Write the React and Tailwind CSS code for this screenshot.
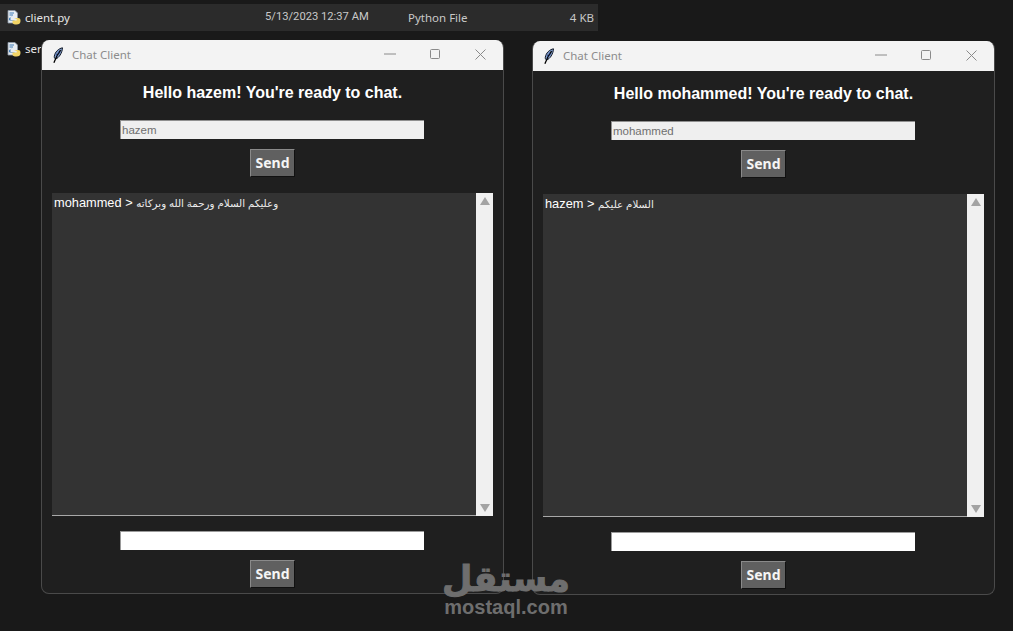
const Feather = () => (
  <svg width="12" height="17" viewBox="0 0 12 17" className="shrink-0">
    <path d="M10.5 0.8C6.5 1.5 3 5 2.3 9.2 2.1 10.6 2.6 11.6 3.5 12 7 11 10.2 6 10.5 0.8Z" fill="#7f9cc9" stroke="#111827" strokeWidth="1" />
    <path d="M8.6 3.2C6.4 6 4.2 9.5 1.9 15.8" fill="none" stroke="#000" strokeWidth="1.3" />
    <path d="M4.2 6.5L5.2 9M6.2 4.5L7.2 6.8" fill="none" stroke="#1e3a8a" strokeWidth="0.7" />
  </svg>
);

const PyIcon = () => (
  <svg width="14" height="15" viewBox="0 0 14 15" className="shrink-0">
    <path d="M1 0.5H8L10.5 3V13H1Z" fill="#e8edf2" stroke="#8a97a6" strokeWidth="0.8" />
    <path d="M2.5 3H7M2.5 5H6" stroke="#3f7cb8" strokeWidth="1" />
    <path d="M5.5 6.5C3.5 6.5 3.5 7.5 3.5 8.5V10H7.5V10.5H3C1.8 10.5 1.5 8 3 7.5L5.5 6.5Z" fill="#3d7ab5" />
    <path d="M7 8H11C13 8 13.5 9 13.5 11C13.5 13.5 12 14.5 9.5 14.5C7 14.5 5.5 14 5.5 12.5V10.5H9.5C10 10.5 10 9.5 9.5 9Z" fill="#f2d465" />
  </svg>
);

const SendButton = () => (
  <button className="w-[45px] h-[28px] pb-[2px] bg-[#606060] border border-t-[#8a8a8a] border-l-[#8a8a8a] border-r-[#111111] border-b-[#111111] text-[#f5f5f5] text-[14px] font-bold font-['Noto_Sans',sans-serif] flex items-center justify-center">
    Send
  </button>
);

const ChatWindow = ({ name, prefix, msg, className }) => (
  <div className={`absolute w-[463px] h-[554px] rounded-[8px] border-x border-b border-[#4a4a4a] bg-[#1f1f1f] overflow-hidden flex flex-col ${className}`}>
    <div className="h-[30px] shrink-0 bg-[#f3f3f3] flex items-center pl-[10px] text-[#8c8c8c]">
      <Feather />
      <span className="ml-[8px] text-[11.5px] font-['Noto_Sans',sans-serif] flex-1">Chat Client</span>
      <svg width="12" height="2" viewBox="0 0 12 2" className="mr-[34px] mb-[2px]"><path d="M0 1H12" stroke="#8a8a8a" strokeWidth="1" /></svg>
      <svg width="10" height="10" viewBox="0 0 10 10" className="mr-[35px] mb-[2px]"><rect x="0.5" y="0.5" width="9" height="9" rx="1" fill="none" stroke="#8a8a8a" /></svg>
      <svg width="11" height="11" viewBox="0 0 11 11" className="mr-[17px] mb-[2px]"><path d="M0.5 0.5L10.5 10.5M10.5 0.5L0.5 10.5" stroke="#8a8a8a" strokeWidth="1" /></svg>
    </div>
    <div className="flex-1 flex flex-col min-h-0">
      <div className="mt-[13px] h-[20px] leading-[20px] text-center text-white text-[16px] font-bold font-['Liberation_Sans',sans-serif]">
        Hello {name}! You're ready to chat.
      </div>
      <div className="mt-[17px] ml-[78px] w-[304px] h-[19px] bg-[#efefef] border-t border-l border-[#8f8f8f] pl-[1px] text-[#6f6f6f] text-[11.5px] leading-[19px] font-['Liberation_Sans',sans-serif]">
        {name}
      </div>
      <div className="mt-[10px] ml-[208px]"><SendButton /></div>
      <div className="mt-[16px] ml-[10px] w-[441px] h-[323px] flex">
        <div className="w-[424px] h-full bg-[#333333] border-b border-[#a8a8a8] pl-[2px] pt-[1px] text-white text-[12.8px] leading-[17px] font-['Liberation_Sans','DejaVu_Sans',sans-serif] whitespace-nowrap overflow-hidden">
          {prefix} &gt; <span className="text-[10.3px] text-[#ececec]" dir="rtl">{msg}</span>
        </div>
        <div className="w-[17px] h-full bg-[#f0f0f0] flex flex-col items-center justify-between py-[4px]">
          <svg width="10" height="8" viewBox="0 0 10 8"><path d="M5 0L10 8H0Z" fill="#a3a3a3" /></svg>
          <svg width="10" height="8" viewBox="0 0 10 8"><path d="M5 8L10 0H0Z" fill="#a3a3a3" /></svg>
        </div>
      </div>
      <div className="mt-[15px] ml-[78px] w-[304px] h-[19px] bg-white border-t border-l border-[#9a9a9a]" />
      <div className="mt-[10px] ml-[208px]"><SendButton /></div>
    </div>
  </div>
);

export default function App() {
  return (
    <div className="relative w-[1013px] h-[631px] overflow-hidden bg-[#191919] font-['Noto_Sans',sans-serif]">
      <div className="pt-[4px]">
        <div className="w-[598px] h-[27px] bg-[#2b2b2b] flex items-center text-[#e6e6e6] text-[11.5px]">
          <span className="ml-[7px]"><PyIcon /></span>
          <span className="ml-[4px] w-[240px]">client.py</span>
          <span className="w-[143px] text-[#c9c9c9] text-[11.2px] font-['Roboto',sans-serif]">5/13/2023 12:37 AM</span>
          <span className="w-[100px] text-[#c9c9c9]">Python File</span>
          <span className="w-[86px] text-right text-[#c9c9c9]">4 KB</span>
        </div>
        <div className="mt-[5px] h-[26px] flex items-center text-[#e6e6e6] text-[11.5px]">
          <span className="ml-[7px]"><PyIcon /></span>
          <span className="ml-[4px]">server.py</span>
        </div>
      </div>

      <ChatWindow className="left-[41px] top-[40px]" name="hazem" prefix="mohammed" msg="وعليكم السلام ورحمة الله وبركاته" />
      <ChatWindow className="left-[532px] top-[41px]" name="mohammed" prefix="hazem" msg="السلام عليكم" />

      <div className="absolute left-[444px] top-[558px] w-[124px] flex flex-col items-center text-[#6e6e6e] pointer-events-none">
        <div className="h-[39px] leading-[42px] text-[35px] font-bold font-['DejaVu_Sans',sans-serif] [-webkit-text-stroke:1px_#6e6e6e]" dir="rtl">مستقل</div>
        <div className="h-[20px] leading-[20px] text-[20px] font-bold font-['Liberation_Sans',sans-serif]">mostaql.com</div>
      </div>
    </div>
  );
}
